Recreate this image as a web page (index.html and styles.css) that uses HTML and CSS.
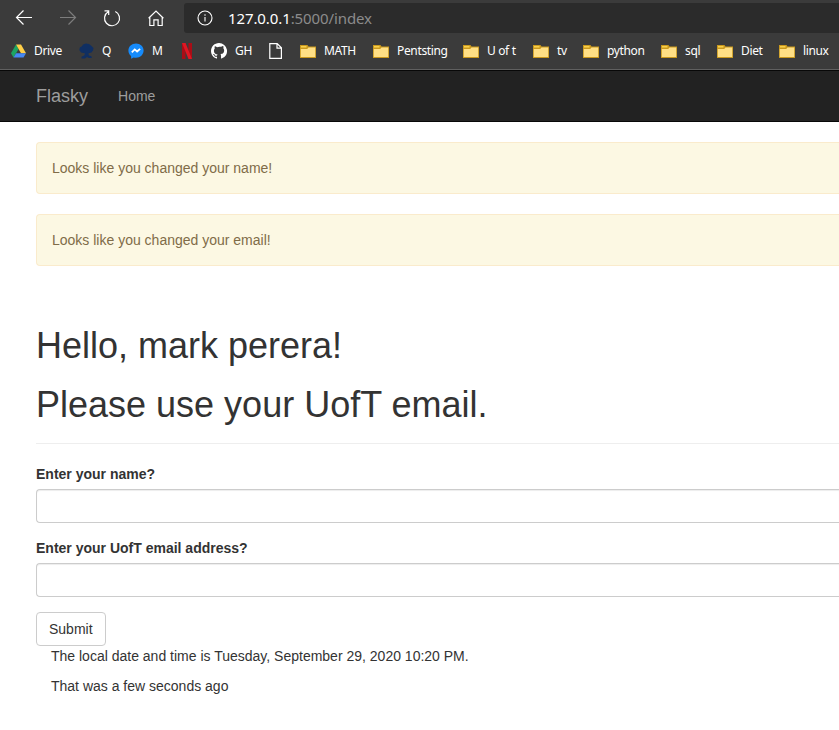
FILE: index.html
```
<!DOCTYPE html>
<html lang="en">
<head>
<meta charset="utf-8">
<title>Flasky</title>
<link rel="stylesheet" href="styles.css">
</head>
<body>
<svg class="defs" width="0" height="0" aria-hidden="true">
  <symbol id="folder" viewBox="0 0 16 13"><path fill="#c9981d" d="M0 0h7.500l1 1.500H16V13H0z"/><path fill="#f7cf4b" d="M1 1h5.500v1.600H1z"/><path fill="#ffdf85" d="M.8 4h6.400L8.500 2.600h6.700v9.500H.8z"/></symbol>
</svg>
<header class="browser">
  <div class="toolbar">
    <div class="controls">
      <svg class="ctl" viewBox="0 0 20 20"><path d="M18 9.500H2.700M9.500 2.500L2.500 9.500l7 7"/></svg>
      <svg class="ctl off" viewBox="0 0 20 20"><path d="M2 9.500h15.300M10.500 2.500l7 7-7 7"/></svg>
      <svg class="ctl" viewBox="0 0 20 20"><path d="M6.200 3.800A7.500 7.500 0 1 0 13.300 3.500M2.500 2.800h4.200v4.200"/></svg>
      <svg class="ctl" viewBox="0 0 20 20"><path d="M3.800 9.200v8.300h4.100v-5.600h4.200v5.600h4.100V9.200M2.600 10.200L10 3l7.400 7.200"/></svg>
    </div>
    <div class="address">
      <svg class="info" viewBox="0 0 16 16"><circle cx="8" cy="8" r="7"/><path d="M8 7v4.500M8 4.200v1.500"/></svg>
      <span class="url"><b>127.0.0.1</b>:5000/index</span>
    </div>
  </div>
  <nav class="bookmarks">
    <a class="site"><svg class="ico" viewBox="0 0 16 16"><path fill="#1da462" d="M5 1.500L0 10.200l2.500 4.300L7.600 5.900z"/><path fill="#ffcf48" d="M5 1.500h5l5 8.700h-5z"/><path fill="#4688f4" d="M5.100 10.200H15l-2.500 4.300h-10z"/></svg><span>Drive</span></a>
    <a class="site"><svg class="ico" viewBox="0 0 16 16"><path fill="#102f62" d="M4 1.500l3-1 3 .5 2.500 2 2 2-.5 2.500-1.500 2-3 .8.200 2 3 1.200v1.500h-3L8 14l-2 1.500H2.500V13.800l3-1.500.3-2L2 9.500.3 7l.5-2.500L3 3.300z"/></svg><span>Q</span></a>
    <a><svg class="ico" viewBox="0 0 16 16"><path fill="#168bfb" d="M8 .4C3.700.4.4 3.500.4 7.500c0 2.300 1 4.200 2.700 5.500v2.800l2.600-1.400c.7.200 1.500.3 2.300.3 4.300 0 7.600-3.100 7.600-7.200S12.300.4 8 .4z"/><path fill="none" stroke="#fff" stroke-width="1.800" d="M3.800 9.300L6.700 6.400l2.400 2.100 3-2.700"/></svg><span>M</span></a>
    <a><svg class="ico" viewBox="0 0 16 16"><path fill="#a90d16" d="M0 0h3.500v16H0zM6.500 0H10v16H6.500z"/><path fill="#df1723" d="M0 0h3.500L10 16H6.500z"/></svg></a>
    <a><svg class="ico" viewBox="0 0 16 16"><path fill="#fff" d="M8 0C3.580 0 0 3.580 0 8c0 3.540 2.290 6.530 5.470 7.590.4.070.55-.17.55-.38v-1.490c-2.010.37-2.530-.49-2.690-.94-.09-.23-.48-.94-.82-1.130-.28-.15-.68-.52-.01-.53.63-.01 1.080.58 1.230.82.72 1.210 1.870.87 2.330.66.07-.52.28-.87.510-1.070-1.780-.2-3.640-.89-3.640-3.950 0-.87.31-1.590.82-2.150-.08-.2-.36-1.020.08-2.120 0 0 .67-.21 2.200.82A7.600 7.600 0 0 1 10.030 3.860c1.530-1.040 2.200-.82 2.200-.82.44 1.100.16 1.920.08 2.120.51.56.82 1.270.82 2.150 0 3.070-1.870 3.750-3.650 3.950.29.25.54.73.54 1.480v2.470c0 .21.15.46.55.38A8 8 0 0 0 8 0z"/></svg><span>GH</span></a>
    <a><svg class="ico" viewBox="0 0 16 16"><path fill="none" stroke="#fff" stroke-width="1.200" d="M.8.600h7.400l4.200 4.200v10.600H.8zM8 .6v4.500h4.400"/></svg></a>
    <a><svg class="folder"><use href="#folder"/></svg><span>MATH</span></a>
    <a><svg class="folder"><use href="#folder"/></svg><span>Pentsting</span></a>
    <a><svg class="folder"><use href="#folder"/></svg><span>U of t</span></a>
    <a><svg class="folder"><use href="#folder"/></svg><span>tv</span></a>
    <a><svg class="folder"><use href="#folder"/></svg><span>python</span></a>
    <a><svg class="folder"><use href="#folder"/></svg><span>sql</span></a>
    <a><svg class="folder"><use href="#folder"/></svg><span>Diet</span></a>
    <a><svg class="folder"><use href="#folder"/></svg><span>linux</span></a>
  </nav>
</header>
<nav class="navbar"><a class="brand">Flasky</a><a class="link">Home</a></nav>
<main class="container">
  <div class="alert">Looks like you changed your name!</div>
  <div class="alert">Looks like you changed your email!</div>
  <div class="page-header">
    <h1>Hello, mark perera!</h1>
    <h1>Please use your UofT email.</h1>
  </div>
  <form>
    <div class="group"><label for="name">Enter your name?</label><input id="name" type="text"></div>
    <div class="group"><label for="email">Enter your UofT email address?</label><input id="email" type="text"></div>
    <button type="button">Submit</button>
  </form>
  <div class="moment">
    <p>The local date and time is Tuesday, September 29, 2020 10:20 PM.</p>
    <p>That was a few seconds ago</p>
  </div>
</main>
</body>
</html>
```
FILE: styles.css
```
* { box-sizing: border-box; }
body {
  margin: 0;
  height: 730px;
  overflow: hidden;
  background: #fff;
  color: #333;
  font: 14px/20px "Liberation Sans", Arial, sans-serif;
}
.defs { display: block; }

.browser {
  height: 70px;
  background: #3b3b3b;
  border-bottom: 1px solid #606060;
  font-family: "Noto Sans", "Open Sans", sans-serif;
  color: #fff;
}
.toolbar { display: flex; height: 33px; padding-top: 3px; }
.controls { display: flex; align-items: center; gap: 24px; width: 184px; padding-left: 14px; }
.ctl { width: 20px; height: 20px; fill: none; stroke: #fff; stroke-width: 1.2; }
.off { stroke: #7d7d7d; }
.address {
  display: flex;
  flex: 1;
  align-items: center;
  gap: 15px;
  padding-left: 13px;
  background: #2b2b2b;
  border-radius: 3px 0 0 3px;
}
.info { width: 16px; height: 16px; fill: none; stroke: #fff; stroke-width: 1.1; }
.url { font-size: 15px; letter-spacing: -0.1px; color: #8c8c8c; }
.url b { font-weight: 400; color: #fff; }

.bookmarks {
  display: grid;
  grid-template-columns: 68px 49px 54px 29px 58px 31px 73px 90px 70px 50px 78px 56px 62px 60px;
  height: 36px;
  padding-left: 11px;
  font-size: 12px;
  letter-spacing: -0.35px;
}
.bookmarks a { display: flex; align-items: center; white-space: nowrap; }
.bookmarks svg { flex: none; width: 16px; margin-right: 8px; }
.bookmarks .site svg { margin-right: 7px; }
.ico { height: 16px; }
.folder { height: 13px; }

.navbar {
  display: flex;
  align-items: center;
  height: 52px;
  padding-left: 36px;
  background: #222;
  border: solid #080808;
  border-width: 1px 0;
  color: #9d9d9d;
}
.brand { margin-right: 30px; font-size: 18px; }

.container { padding: 20px 0 0 36px; }
.alert {
  height: 52px;
  margin-bottom: 20px;
  padding: 15px;
  background: #fcf8e3;
  border: 1px solid #faebcc;
  border-right: 0;
  border-radius: 4px 0 0 4px;
  color: #806c48;
}
.page-header {
  height: 138px;
  margin: 40px 0 20px;
  padding-top: 20px;
  border-bottom: 1px solid #eee;
}
h1 { margin: 0 0 19.400px; font-size: 36px; font-weight: 500; line-height: 39.600px; }
.group { margin-bottom: 15px; }
label { display: block; margin-bottom: 5px; font-weight: 700; }
input {
  display: block;
  width: 100%;
  height: 34px;
  padding: 6px 12px;
  border: 1px solid #ccc;
  border-right: 0;
  border-radius: 4px 0 0 4px;
  box-shadow: inset 0 1px 1px rgba(0, 0, 0, .075);
}
button {
  display: block;
  height: 34px;
  padding: 6px 12px;
  border: 1px solid #ccc;
  border-radius: 4px;
  background: #fff;
  color: #333;
  font: inherit;
}
.moment { padding-left: 15px; }
.moment p { margin: 0 0 10px; }
```
